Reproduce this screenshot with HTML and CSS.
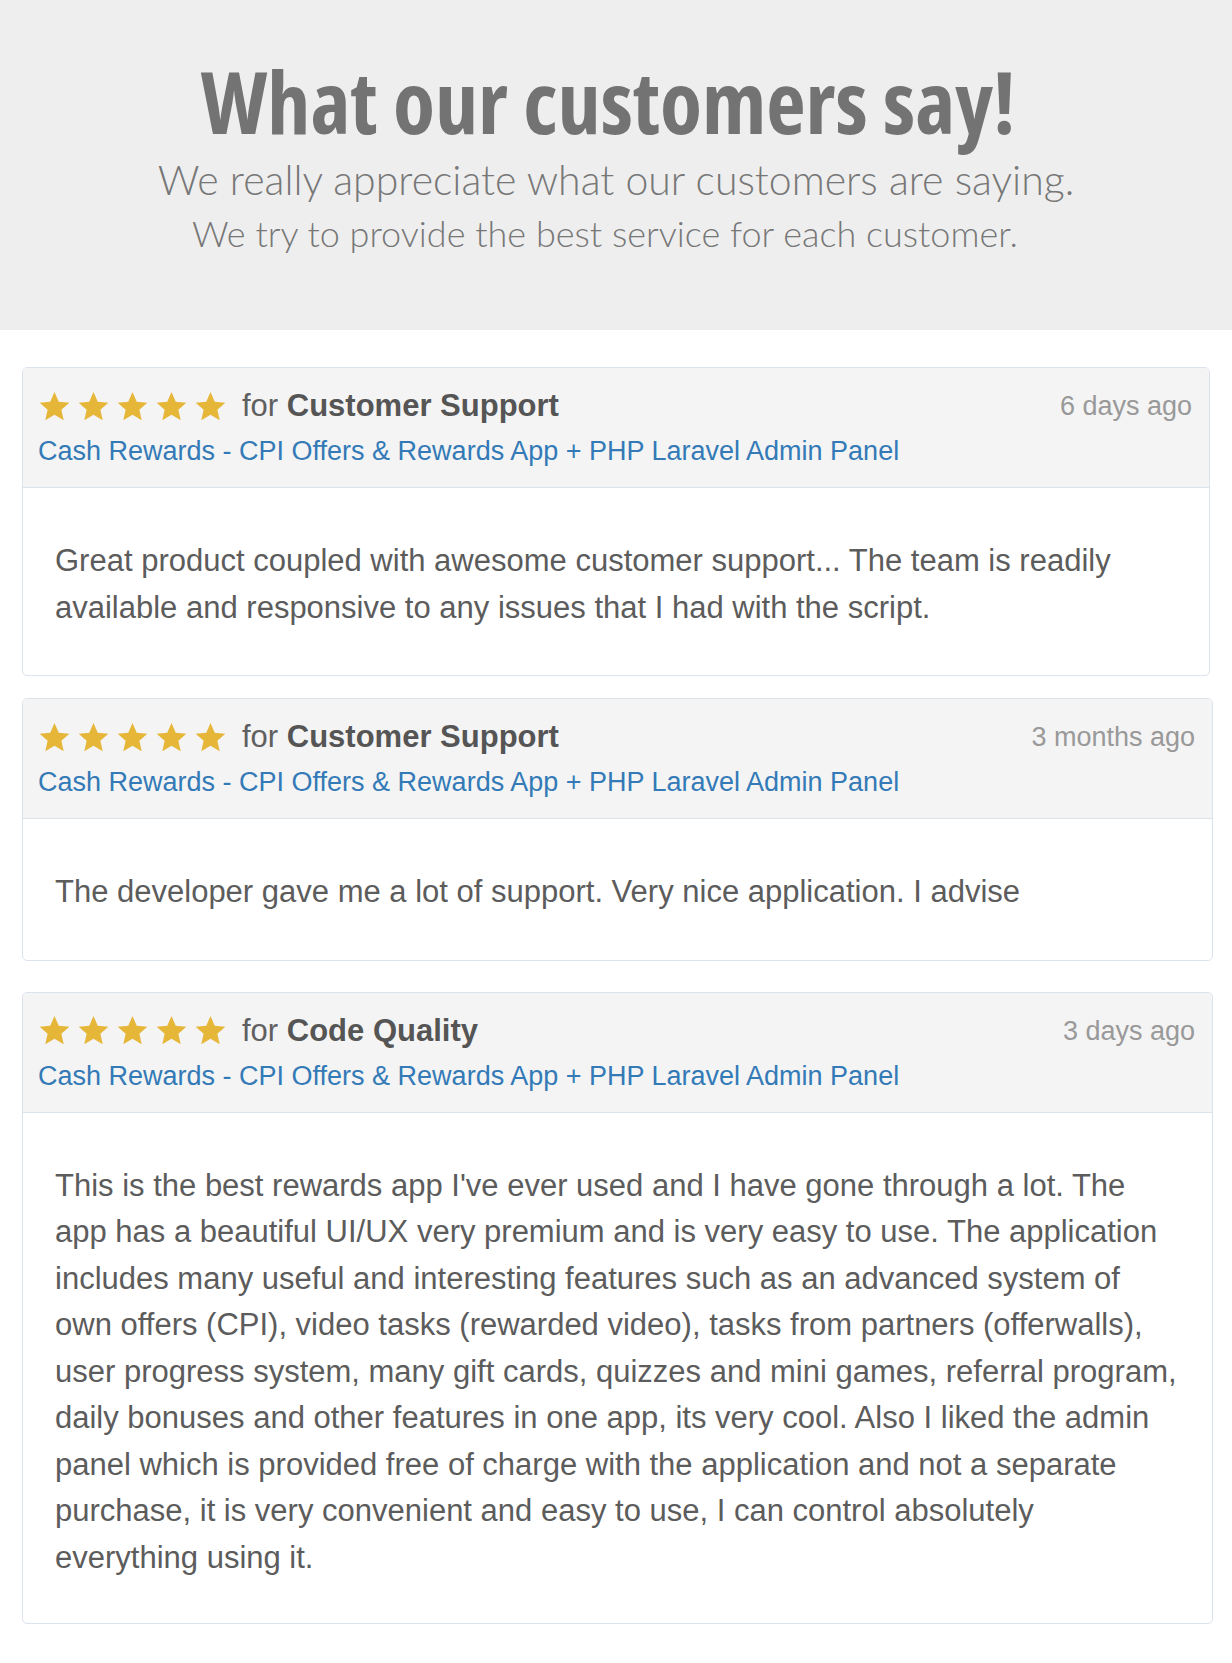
FILE: index.html
```html
<!DOCTYPE html>
<html>
<head>
<meta charset="utf-8">
<link rel="stylesheet" href="styles.css">
</head>
<body>
<header class="hero">
  <h1 class="hero-title">What our customers say!</h1>
  <p class="hero-sub">We really appreciate what our customers are saying.</p>
  <p class="hero-sub hero-sub2">We try to provide the best service for each customer.</p>
</header>
<main class="reviews">
  <section class="panel panel-narrow">
    <div class="panel-heading">
      <div class="heading-main">
        <div class="rating">
          <span class="stars">
            <svg class="star" viewBox="0 0 24 24"><path d="M12 1.5l3.1 7.1 7.7.7-5.8 5.1 1.7 7.6L12 18l-6.7 4 1.7-7.6L1.2 9.3l7.7-.7z"/></svg>
            <svg class="star" viewBox="0 0 24 24"><path d="M12 1.5l3.1 7.1 7.7.7-5.8 5.1 1.7 7.6L12 18l-6.7 4 1.7-7.6L1.2 9.3l7.7-.7z"/></svg>
            <svg class="star" viewBox="0 0 24 24"><path d="M12 1.5l3.1 7.1 7.7.7-5.8 5.1 1.7 7.6L12 18l-6.7 4 1.7-7.6L1.2 9.3l7.7-.7z"/></svg>
            <svg class="star" viewBox="0 0 24 24"><path d="M12 1.5l3.1 7.1 7.7.7-5.8 5.1 1.7 7.6L12 18l-6.7 4 1.7-7.6L1.2 9.3l7.7-.7z"/></svg>
            <svg class="star" viewBox="0 0 24 24"><path d="M12 1.5l3.1 7.1 7.7.7-5.8 5.1 1.7 7.6L12 18l-6.7 4 1.7-7.6L1.2 9.3l7.7-.7z"/></svg>
          </span>
          <span class="for">for <strong>Customer Support</strong></span>
        </div>
        <a class="item-link" href="#">Cash Rewards - CPI Offers &amp; Rewards App + PHP Laravel Admin Panel</a>
      </div>
      <span class="date">6 days ago</span>
    </div>
    <div class="panel-body panel-body-loose">
      <p>Great product coupled with awesome customer support... The team is readily available and responsive to any issues that I had with the script.</p>
    </div>
  </section>

  <section class="panel panel-spaced">
    <div class="panel-heading">
      <div class="heading-main">
        <div class="rating">
          <span class="stars">
            <svg class="star" viewBox="0 0 24 24"><path d="M12 1.5l3.1 7.1 7.7.7-5.8 5.1 1.7 7.6L12 18l-6.7 4 1.7-7.6L1.2 9.3l7.7-.7z"/></svg>
            <svg class="star" viewBox="0 0 24 24"><path d="M12 1.5l3.1 7.1 7.7.7-5.8 5.1 1.7 7.6L12 18l-6.7 4 1.7-7.6L1.2 9.3l7.7-.7z"/></svg>
            <svg class="star" viewBox="0 0 24 24"><path d="M12 1.5l3.1 7.1 7.7.7-5.8 5.1 1.7 7.6L12 18l-6.7 4 1.7-7.6L1.2 9.3l7.7-.7z"/></svg>
            <svg class="star" viewBox="0 0 24 24"><path d="M12 1.5l3.1 7.1 7.7.7-5.8 5.1 1.7 7.6L12 18l-6.7 4 1.7-7.6L1.2 9.3l7.7-.7z"/></svg>
            <svg class="star" viewBox="0 0 24 24"><path d="M12 1.5l3.1 7.1 7.7.7-5.8 5.1 1.7 7.6L12 18l-6.7 4 1.7-7.6L1.2 9.3l7.7-.7z"/></svg>
          </span>
          <span class="for">for <strong>Customer Support</strong></span>
        </div>
        <a class="item-link" href="#">Cash Rewards - CPI Offers &amp; Rewards App + PHP Laravel Admin Panel</a>
      </div>
      <span class="date">3 months ago</span>
    </div>
    <div class="panel-body panel-body-loose">
      <p>The developer gave me a lot of support. Very nice application. I advise</p>
    </div>
  </section>

  <section class="panel">
    <div class="panel-heading">
      <div class="heading-main">
        <div class="rating">
          <span class="stars">
            <svg class="star" viewBox="0 0 24 24"><path d="M12 1.5l3.1 7.1 7.7.7-5.8 5.1 1.7 7.6L12 18l-6.7 4 1.7-7.6L1.2 9.3l7.7-.7z"/></svg>
            <svg class="star" viewBox="0 0 24 24"><path d="M12 1.5l3.1 7.1 7.7.7-5.8 5.1 1.7 7.6L12 18l-6.7 4 1.7-7.6L1.2 9.3l7.7-.7z"/></svg>
            <svg class="star" viewBox="0 0 24 24"><path d="M12 1.5l3.1 7.1 7.7.7-5.8 5.1 1.7 7.6L12 18l-6.7 4 1.7-7.6L1.2 9.3l7.7-.7z"/></svg>
            <svg class="star" viewBox="0 0 24 24"><path d="M12 1.5l3.1 7.1 7.7.7-5.8 5.1 1.7 7.6L12 18l-6.7 4 1.7-7.6L1.2 9.3l7.7-.7z"/></svg>
            <svg class="star" viewBox="0 0 24 24"><path d="M12 1.5l3.1 7.1 7.7.7-5.8 5.1 1.7 7.6L12 18l-6.7 4 1.7-7.6L1.2 9.3l7.7-.7z"/></svg>
          </span>
          <span class="for">for <strong>Code Quality</strong></span>
        </div>
        <a class="item-link" href="#">Cash Rewards - CPI Offers &amp; Rewards App + PHP Laravel Admin Panel</a>
      </div>
      <span class="date">3 days ago</span>
    </div>
    <div class="panel-body">
      <p>This is the best rewards app I've ever used and I have gone through a lot. The app has a beautiful UI/UX very premium and is very easy to use. The application includes many useful and interesting features such as an advanced system of own offers (CPI), video tasks (rewarded video), tasks from partners (offerwalls), user progress system, many gift cards, quizzes and mini games, referral program, daily bonuses and other features in one app, its very cool. Also I liked the admin panel which is provided free of charge with the application and not a separate purchase, it is very convenient and easy to use, I can control absolutely everything using it.</p>
    </div>
  </section>
</main>
</body>
</html>
```

FILE: styles.css
```css
html, body {
  margin: 0;
  padding: 0;
  background: #ffffff;
}

body {
  width: 1232px;
  font-family: "Liberation Sans", Arial, sans-serif;
}

.hero {
  background: #eeeeee;
  height: 330px;
  box-sizing: border-box;
  padding-top: 57px;
  text-align: center;
  color: #737373;
}

.hero-title {
  margin: 0;
  padding-right: 16px;
  font-family: "Open Sans", sans-serif;
  font-stretch: 75%;
  font-weight: 700;
  font-size: 86px;
  line-height: 88px;
}

.hero-sub {
  margin: 11px 0 0;
  font-family: Lato, "Open Sans", sans-serif;
  font-weight: 300;
  font-size: 41px;
  line-height: 48px;
  color: #777777;
}

.hero-sub2 {
  margin-top: 5px;
  padding-right: 22px;
  font-size: 36px;
}

.reviews {
  padding: 37px 19px 40px 22px;
  display: flex;
  flex-direction: column;
}

.panel {
  border: 1px solid #dde3ea;
  border-radius: 5px;
  background: #ffffff;
  margin-bottom: 22px;
}

.panel-narrow {
  margin-right: 3px;
}

.panel-spaced {
  margin-bottom: 31px;
}

.panel-heading {
  display: flex;
  justify-content: space-between;
  align-items: flex-start;
  background: #f4f4f4;
  border-bottom: 1px solid #dde3ea;
  border-radius: 5px 5px 0 0;
  padding: 18px 17px 17px 15px;
}

.heading-main {
  display: flex;
  flex-direction: column;
}

.rating {
  display: flex;
  align-items: center;
  height: 40px;
}

.stars {
  display: flex;
  gap: 6px;
  margin-right: 15px;
}

.star {
  width: 33px;
  height: 33px;
  fill: #e6b638;
  display: block;
}

.for {
  font-size: 31px;
  color: #606060;
}

.for strong {
  font-weight: 700;
  color: #555555;
}

.item-link {
  margin-top: 6px;
  font-size: 27px;
  line-height: 38px;
  color: #337ab7;
  text-decoration: none;
}

.date {
  font-size: 27px;
  line-height: 40px;
  color: #999999;
}

.panel-body {
  padding: 50px 32px 42px 32px;
}

.panel-body-loose {
  padding-bottom: 44px;
}

.panel-body p {
  margin: 0;
  font-size: 31px;
  line-height: 46.5px;
  color: #5c5c5c;
}
```
